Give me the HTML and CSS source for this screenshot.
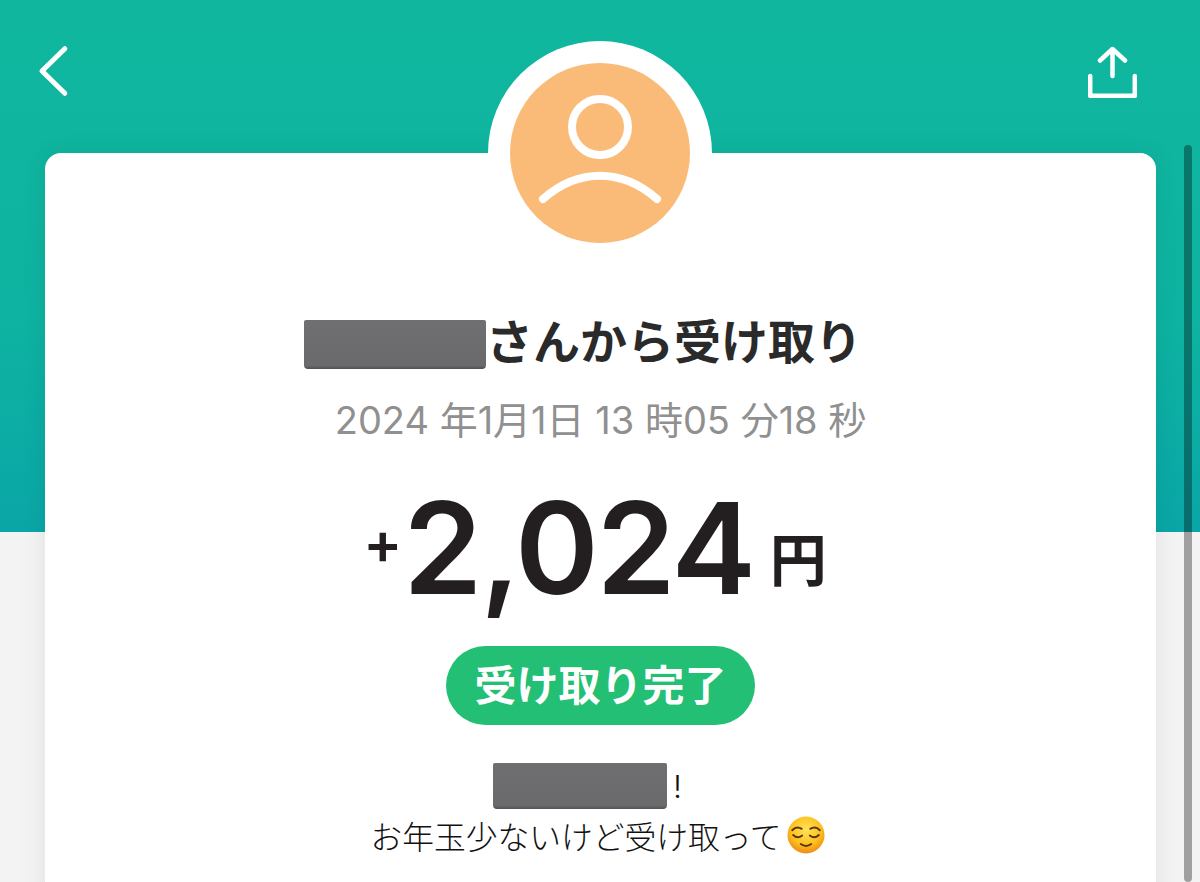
FILE: index.html
```html
<!DOCTYPE html>
<html lang="ja">

<head>
    <meta charset="UTF-8">
    <meta name="viewport" content="width=device-width, initial-scale=1.0">
    <title>受け取り</title>
    <link rel="stylesheet" href="styles.css">
</head>

<body>

    <div class="hero"></div>
    <div class="scrollbar"></div>

    <div class="page">
        <div class="nav">
            <svg class="icon-back" width="32" height="52" viewBox="0 0 32 52" fill="none">
                <path d="M27.800 3.700 L5 26 L27.800 48.300" stroke="#fff" stroke-width="5" stroke-linecap="round" stroke-linejoin="round"/>
            </svg>
            <svg class="icon-share" width="49" height="54" viewBox="0 0 49 54" fill="none">
                <path d="M24.500 3.500 V30 M12 14.500 L24.500 3 L37 14.500" stroke="#fff" stroke-width="4.500" stroke-linecap="round" stroke-linejoin="round"/>
                <path d="M2.200 30 V49.800 H46.800 V30" stroke="#fff" stroke-width="4.500" stroke-linecap="round" stroke-linejoin="round"/>
            </svg>
        </div>

        <div class="card">
            <div class="avatar">
                <div class="avatar-inner">
                    <svg width="180" height="180" viewBox="0 0 180 180" fill="none">
                        <circle cx="90" cy="64" r="28" stroke="#fff" stroke-width="8"/>
                        <path d="M33 136 C 68 105, 112 105, 147 136" stroke="#fff" stroke-width="8" stroke-linecap="round"/>
                    </svg>
                </div>
            </div>

            <h2 class="title"><span class="blur blur-name"></span>さんから受け取り</h2>
            <p class="date">2024 年1月1日 13 時05 分18 秒</p>

            <div class="amount">
                <span class="plus">+</span><span class="value">2,024</span><span class="yen">円</span>
            </div>

            <div class="status">受け取り完了</div>

            <div class="message">
                <div class="message-line message-name"><span class="blur blur-msg"></span>!</div>
                <div class="message-line message-body">お年玉少ないけど受け取って
                    <svg class="emoji" width="38" height="38" viewBox="0 0 40 40" fill="none">
                        <defs>
                            <radialGradient id="face" cx="50%" cy="36%" r="66%">
                                <stop offset="0" stop-color="#ffe25a"/>
                                <stop offset="0.6" stop-color="#fcc21f"/>
                                <stop offset="1" stop-color="#ec8612"/>
                            </radialGradient>
                        </defs>
                        <circle cx="20" cy="20" r="19.500" fill="url(#face)"/>
                        <path d="M5.500 15 Q10 10 15.500 13.500 M24.500 13.500 Q30 10 34.500 15" stroke="#5a3510" stroke-width="2" stroke-linecap="round"/>
                        <path d="M6.500 20 Q11 24.500 16 20.500 M24 20.500 Q29 24.500 33.500 20" stroke="#5a3510" stroke-width="2" stroke-linecap="round"/>
                        <path d="M14.500 29.500 Q20 33.500 25.500 29.500" stroke="#5a3510" stroke-width="2" stroke-linecap="round"/>
                    </svg>
                </div>
            </div>
        </div>
    </div>

</body>

</html>
```

FILE: styles.css
```css
html,
body {
    height: 100%;
}

body {
    margin: 0;
    background: #f3f3f3;
    font-family: "Inter", "Liberation Sans", "Noto Sans CJK JP", sans-serif;
    color: #231f20;
    overflow: hidden;
    position: relative;
}

.hero {
    position: absolute;
    top: 0;
    left: 0;
    width: 100%;
    height: 532px;
    background: linear-gradient(180deg, #10b79e 0%, #0eb3a1 60%, #0aa6a7 100%);
}

.scrollbar {
    position: absolute;
    top: 145px;
    left: 1184px;
    width: 8px;
    height: 737px;
    border-radius: 4px;
    background: rgba(0, 0, 0, 0.34);
}

.page {
    position: relative;
    padding: 0 44px 0 45px;
}

.nav {
    display: flex;
    justify-content: space-between;
    height: 153px;
    padding: 45px 19px 0 0;
    box-sizing: border-box;
    align-items: flex-start;
}

.icon-back {
    margin-left: -8px;
}

.icon-share {
    margin-top: 1px;
}

.card {
    position: relative;
    height: 760px;
    background: #fff;
    border-radius: 16px;
    box-shadow: 0 0 24px rgba(0, 0, 0, 0.08);
    text-align: center;
    padding-top: 161px;
    box-sizing: border-box;
}

.avatar {
    position: absolute;
    top: -112px;
    left: 50%;
    margin-left: -112.5px;
    width: 224px;
    height: 224px;
    border-radius: 50%;
    background: #fff;
    display: flex;
    align-items: center;
    justify-content: center;
}

.avatar-inner {
    width: 180px;
    height: 180px;
    border-radius: 50%;
    background: #fbbb78;
}

.avatar-inner svg {
    display: block;
}

.title {
    margin: 0;
    padding-right: 35px;
    font-size: 47px;
    line-height: 56px;
    font-weight: 700;
    color: #2a2a2a;
    display: flex;
    justify-content: center;
    align-items: center;
}

.blur {
    display: inline-block;
    background: linear-gradient(180deg, #6f6f71 0%, #6a6a6c 93%, #4f4f55 100%);
    border-radius: 2px 2px 4px 4px;
}

.blur-name {
    width: 182px;
    height: 49px;
    margin-top: 5px;
}

.date {
    margin: 28px 0 0;
    font-size: 38px;
    line-height: 44px;
    color: #909090;
}

.amount {
    margin-top: 41px;
    padding-right: 11px;
    display: flex;
    justify-content: center;
    align-items: baseline;
    height: 130px;
    line-height: 130px;
    font-weight: 600;
}

.plus {
    font-size: 58px;
    margin-right: 1px;
    position: relative;
    top: -30px;
}

.value {
    font-size: 127px;
    letter-spacing: -2.200px;
}

.yen {
    font-size: 57px;
    font-weight: 700;
    margin-left: 16px;
    position: relative;
    top: -13px;
}

.status {
    width: 309px;
    height: 79px;
    margin: 33px auto 0;
    border-radius: 40px;
    background: #22bf75;
    color: #fff;
    font-size: 42px;
    font-weight: 700;
    line-height: 79px;
}

.message {
    margin-top: 38px;
    font-size: 31.750px;
    font-weight: 300;
    color: #111;
}

.message-line {
    display: flex;
    justify-content: center;
    align-items: center;
}

.message-name {
    padding-right: 26px;
}

.message-body {
    margin-top: 3px;
    padding-right: 6px;
}

.blur-msg {
    width: 174px;
    height: 46px;
    margin-right: 6px;
}

.emoji {
    margin-left: 5px;
}
```
